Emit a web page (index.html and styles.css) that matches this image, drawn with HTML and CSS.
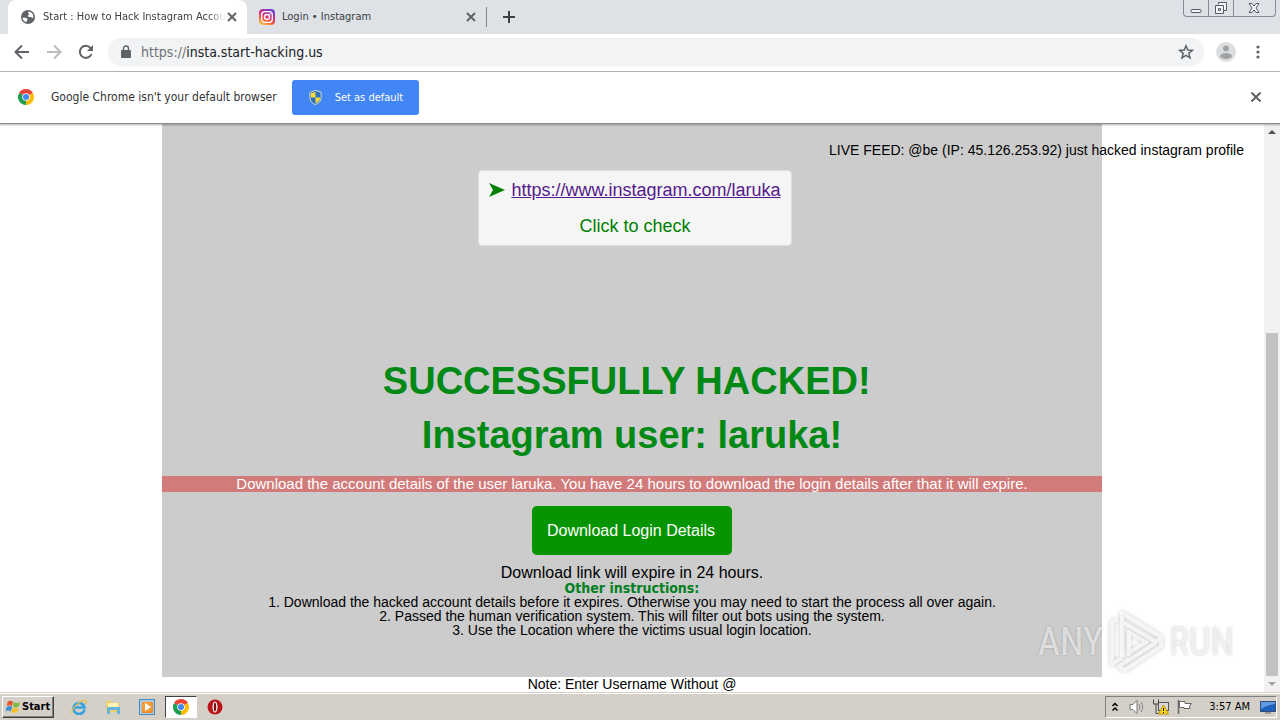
FILE: index.html
```
<!DOCTYPE html>
<html lang="en">
<head>
  <meta charset="utf-8">
  <title>Start : How to Hack Instagram Accou</title>
  <link rel="stylesheet" href="styles.css">
</head>
<body>
  <div class="window">

    <header class="tabstrip">
      <div class="tab active">
        <svg class="favicon" viewBox="0 0 16 16"><circle cx="8" cy="8" r="7" fill="#5f6368"/><path d="M2.500 8.500C2.500 9 3.500 8.500 5 8.700 7 9 8 10 7.500 11 6.500 11.500 6.500 12.500 6.500 13.300 4 12.700 2.500 10.500 2.500 8.500ZM8.500 2.600C11.500 2.900 13.300 5 13.400 7.500 13.200 9.500 12 9 11.500 8.500 11 7.500 9.500 8.300 8.500 7.800 7.500 7 8 6 9 5.600 9.500 5 7.500 4.500 8.500 2.600Z" fill="#fff"/></svg>
        <span class="tab-title fade">Start : How to Hack Instagram Accou</span>
        <button class="tab-close" type="button" aria-label="Close tab"><svg viewBox="0 0 10 10"><path d="M1 1 9 9M9 1 1 9"/></svg></button>
      </div>
      <div class="tab">
        <svg class="favicon" viewBox="0 0 16 16">
          <defs>
            <linearGradient id="insta" x1="0.200" y1="1" x2="0.700" y2="0">
              <stop offset="0" stop-color="#fdc84b"/>
              <stop offset="0.300" stop-color="#f5663b"/>
              <stop offset="0.600" stop-color="#d22d86"/>
              <stop offset="1" stop-color="#6a3fd0"/>
            </linearGradient>
          </defs>
          <rect width="16" height="16" rx="4" fill="url(#insta)"/>
          <rect x="2.700" y="2.700" width="10.600" height="10.600" rx="3" fill="none" stroke="#fff" stroke-width="1.300"/>
          <circle cx="8" cy="8" r="2.500" fill="none" stroke="#fff" stroke-width="1.300"/>
          <circle cx="11" cy="5" r="0.800" fill="#fff"/>
        </svg>
        <span class="tab-title">Login • Instagram</span>
        <button class="tab-close" type="button" aria-label="Close tab"><svg viewBox="0 0 10 10"><path d="M1 1 9 9M9 1 1 9"/></svg></button>
      </div>
      <button class="new-tab" type="button" aria-label="New tab"><svg viewBox="0 0 12 12"><path d="M6 0V12M0 6H12"/></svg></button>
      <div class="window-buttons">
        <button type="button" aria-label="Minimize"><svg viewBox="0 0 16 14"><rect x="3" y="8.500" width="10" height="3" rx="1"/></svg></button>
        <button type="button" aria-label="Restore"><svg viewBox="0 0 16 14"><path d="M5.500 3.500V1.500H13.500V9.500H11M2.500 4.500H10.500V12.500H2.500ZM5.500 7.500H7.500V9.500H5.500Z"/></svg></button>
        <button class="wide" type="button" aria-label="Close"><svg viewBox="0 0 16 14"><path d="M3 2.500H6L8 5 10 2.500H13L10 7 13 11.500H10L8 9 6 11.500H3L6 7Z"/></svg></button>
      </div>
    </header>

    <nav class="toolbar">
      <button class="nav-button" type="button" aria-label="Back"><svg viewBox="0 0 16 16"><path d="M15 8H2M8 1.500 1.500 8 8 14.500"/></svg></button>
      <button class="nav-button disabled" type="button" aria-label="Forward"><svg viewBox="0 0 16 16"><path d="M1 8H14M8 1.500 14.500 8 8 14.500"/></svg></button>
      <button class="nav-button" type="button" aria-label="Reload"><svg viewBox="0 0 16 16"><path d="M13.500 10A6 6 0 1 1 12.500 4L13.500 5.500"/><path class="solid" d="M15 1V7H9Z"/></svg></button>
      <div class="omnibox">
        <svg class="lock" viewBox="0 0 10 13"><rect y="5" width="10" height="8" rx="1" fill="#5f6368"/><path d="M2.500 5V3.500A2.500 2.500 0 0 1 7.500 3.500V5" fill="none" stroke="#5f6368" stroke-width="1.400"/></svg>
        <label for="address">https://</label>
        <input id="address" type="text" value="insta.start-hacking.us">
        <svg class="star" viewBox="0 0 16 16"><path d="M8 1.800 9.700 6.100 14.300 6.400 10.800 9.300 12 13.800 8 11.300 4 13.800 5.200 9.300 1.700 6.400 6.300 6.100Z"/></svg>
      </div>
      <svg class="avatar" viewBox="0 0 20 20"><circle cx="10" cy="10" r="10" fill="#dcdee0"/><circle cx="10" cy="6.500" r="3" fill="#a0a3a6"/><ellipse cx="10" cy="14" rx="6" ry="3" fill="#a0a3a6"/></svg>
      <button class="menu" type="button" aria-label="Menu"><svg viewBox="0 0 4 14"><circle cx="2" cy="2" r="1.600"/><circle cx="2" cy="7" r="1.600"/><circle cx="2" cy="12" r="1.600"/></svg></button>
    </nav>

    <div class="infobar">
      <svg class="chrome" viewBox="0 0 16 16">
        <path d="M8 8 1.070 4A8 8 0 0 1 14.930 4Z" fill="#ea4335"/>
        <path d="M8 8 14.930 4A8 8 0 0 1 8 16Z" fill="#fbbc05"/>
        <path d="M8 8V16A8 8 0 0 1 1.070 4Z" fill="#1e9e50"/>
        <circle cx="8" cy="8" r="3.800" fill="#fff"/><circle cx="8" cy="8" r="3" fill="#4285f4"/>
      </svg>
      <span class="info-text">Google Chrome isn't your default browser</span>
      <button class="set-default" type="button">
        <svg viewBox="0 0 14 16"><path d="M7 0.500 13 2.500V8C13 12 10 14.500 7 15.500 4 14.500 1 12 1 8V2.500Z" fill="#2b6fc0" stroke="#e8e3c0"/><path d="M7 2V8H2V3.500ZM7 8H12C12 11 9.500 13.500 7 14.300Z" fill="#fbd93c"/></svg>
        <span>Set as default</span>
      </button>
      <button class="dismiss" type="button" aria-label="Dismiss"><svg viewBox="0 0 10 10"><path d="M0.500 0.500 9.500 9.500M9.500 0.500 0.500 9.500"/></svg></button>
    </div>

    <div class="viewport">
      <main class="page">
        <p class="live-feed">LIVE FEED: @be (IP: 45.126.253.92) just hacked instagram profile</p>
        <section class="content">
          <div class="profile-box">
            <div class="profile-link">
              <svg viewBox="0 0 16 14"><path d="M0 0 16 7 0 14 4 7Z" fill="#008000"/></svg>
              <a href="#">https://www.instagram.com/laruka</a>
            </div>
            <p>Click to check</p>
          </div>
          <h1>SUCCESSFULLY HACKED!&nbsp;</h1>
          <h2>Instagram user: laruka!</h2>
          <p class="warning">Download the account details of the user laruka. You have 24 hours to download the login details after that it will expire.</p>
          <button class="download" type="button">Download Login Details</button>
          <p class="expire">Download link will expire in 24 hours.</p>
          <h3>Other instructions:</h3>
          <ol>
            <li>Download the hacked account details before it expires. Otherwise you may need to start the process all over again.</li>
            <li>Passed the human verification system. This will filter out bots using the system.</li>
            <li>Use the Location where the victims usual login location.</li>
          </ol>
        </section>
        <p class="note">Note: Enter Username Without @</p>
      </main>
      <div class="scrollbar">
        <svg viewBox="0 0 8 4"><path d="M0 4 4 0 8 4Z" fill="#505050"/></svg>
        <div class="track"><div class="thumb"></div></div>
        <svg viewBox="0 0 8 4"><path d="M0 0 4 4 8 0Z" fill="#a3a3a3"/></svg>
      </div>
      <div class="watermark">
        <span>ANY</span>
        <svg viewBox="0 0 58 64">
          <path d="M10 9 5 12V54L15 48M15 47V3L54 27 49 32 15 12M22 46V22L39 32 22 43M54 28V36L18 60 12 56 49 33"/>
        </svg>
        <span>RUN</span>
      </div>
    </div>

    <footer class="taskbar">
      <button class="start" type="button">
        <svg viewBox="0 0 18 16"><path d="M3 2Q6 0 9 2L8 7Q5 5 2 7Z" fill="#e8542c"/><path d="M10 2.500Q13 4.500 17 2.500L15.500 7.500Q12 9.500 9 7.500Z" fill="#7dbb42"/><path d="M2 8Q5 6 8 8L6.500 13Q3.500 11 0.500 13Z" fill="#3b8fd8"/><path d="M8.500 8.500Q12 10.500 15 8.500L14 13.500Q10.500 15.500 7 13.500Z" fill="#fbc12d"/></svg>
        <span>Start</span>
      </button>
      <div class="launchers">
        <button type="button" aria-label="Internet Explorer"><svg viewBox="0 0 16 16"><path d="M13.500 10.500A5.500 5.500 0 1 1 13.500 8.500H4" fill="none" stroke="#36a3e0" stroke-width="2.600"/><path d="M1 14.500C-1 11 10 0 14.500 1.500Q16 2 14.500 5" fill="none" stroke="#e7bd45" stroke-width="1.300"/></svg></button>
        <button type="button" aria-label="Explorer"><svg viewBox="0 0 16 16"><path d="M1 2H6L7 3.500H14V13H1Z" fill="#efcf6c"/><rect x="3" y="4" width="10" height="5" fill="#fff3ba"/><path d="M2 8H15V15H12V11H5V15H2Z" fill="#65b5df"/></svg></button>
        <button type="button" aria-label="Media Player"><svg viewBox="0 0 16 16"><rect x="0.500" y="0.500" width="15" height="15" fill="#a9cce9" stroke="#4a88bd"/><rect x="3" y="3" width="11" height="11" rx="1" fill="#ef8420"/><circle cx="8" cy="8" r="5.500" fill="#f79c34"/><path d="M6 4 12 8 6 12Z" fill="#fff"/></svg></button>
        <button class="pressed" type="button" aria-label="Google Chrome">
          <svg viewBox="0 0 16 16">
            <path d="M8 8 1.070 4A8 8 0 0 1 14.930 4Z" fill="#ea4335"/>
            <path d="M8 8 14.930 4A8 8 0 0 1 8 16Z" fill="#fbbc05"/>
            <path d="M8 8V16A8 8 0 0 1 1.070 4Z" fill="#1e9e50"/>
            <circle cx="8" cy="8" r="3.800" fill="#fff"/><circle cx="8" cy="8" r="3" fill="#4285f4"/>
          </svg>
        </button>
        <button type="button" aria-label="Opera"><svg viewBox="0 0 16 16"><circle cx="8" cy="8" r="7.500" fill="#b9151b"/><ellipse cx="8" cy="8" rx="2.500" ry="5.500" fill="#fff"/><ellipse cx="8" cy="8" rx="1.200" ry="4.500" fill="#7c1014"/></svg></button>
      </div>
      <div class="tray">
        <svg class="chevrons" viewBox="0 0 8 10"><path d="M1.500 4 4 1.500 6.500 4M1.500 8.500 4 6 6.500 8.500" fill="none" stroke="#000" stroke-width="1.500"/></svg>
        <svg viewBox="0 0 16 16"><path d="M1 5.500H4L8 1.500V14.500L4 10.500H1Z" fill="#fff" stroke="#777"/><path d="M10 5Q12 8 10 11M12 3Q15.500 8 12 13" fill="none" stroke="#888"/></svg>
        <svg viewBox="0 0 16 16"><rect x="5.500" y="3.500" width="10" height="8" fill="#d8d8d8" stroke="#555"/><path d="M0.500 0.500V5H5.500V0.500M3 5V14.500H8" fill="none" stroke="#444"/><path d="M10.500 6 15.500 15H5.500Z" fill="#ffd817" stroke="#c49100"/><path d="M10.500 9V12M10.500 13V14" stroke="#000"/></svg>
        <svg viewBox="0 0 16 16"><path d="M1.500 1V15" stroke="#666" stroke-width="1.500"/><path d="M2.500 2.500H8V4.500H14.500L12.500 7 13 9.500H7V8.500H2.500Z" fill="#fff" stroke="#666"/></svg>
        <time>3:57 AM</time>
        <svg viewBox="0 0 16 16"><path d="M0.500 2.500H15.500V12.500H0.500Z" fill="#1d5fbd" stroke="#304b77"/><path d="M1 3H15V5Q7 6 1 10Z" fill="#5c9be2"/><path d="M5 14H11" stroke="#666"/></svg>
      </div>
    </footer>

  </div>
</body>
</html>
```

FILE: styles.css
```
* {
  margin: 0;
  padding: 0;
  box-sizing: border-box;
}

body {
  font-family: "Liberation Sans", Arial, sans-serif;
  font-size: 14px;
  line-height: 14px;
  color: #000;
  background: #fff;
}

button {
  border: 0;
  background: none;
  font-family: inherit;
  cursor: pointer;
}

svg {
  display: block;
  flex: none;
}

.window {
  display: flex;
  flex-direction: column;
  height: 100vh;
  overflow: hidden;
}

.tabstrip,
.toolbar,
.infobar,
.taskbar {
  flex: none;
  display: flex;
  font-family: "DejaVu Sans Condensed", Tahoma, "DejaVu Sans", sans-serif;
}

/* tabs */
.tabstrip {
  height: 34px;
  padding-left: 8px;
  background: #dee1e6;
}

.tab {
  display: flex;
  align-items: center;
  width: 239px;
  padding: 0 10px 0 12px;
  color: #3c4043;
}

.tab.active {
  background: #fff;
  border-radius: 8px 8px 0 0;
}

.favicon {
  width: 16px;
  height: 16px;
  margin-right: 7px;
}

.tab-title {
  white-space: nowrap;
  font-size: 11px;
}

.fade {
  -webkit-mask-image: linear-gradient(to right, #000 90%, transparent);
  mask-image: linear-gradient(to right, #000 90%, transparent);
}

.tab-close {
  margin-left: auto;
}

.tab-close svg {
  width: 10px;
  height: 10px;
}

.tab-close svg,
.new-tab svg,
.dismiss svg {
  stroke: #5f6368;
  stroke-width: 2;
}

.new-tab {
  height: 20px;
  margin-top: 7px;
  padding: 0 16px;
  border-left: 1px solid #80868b;
}

.new-tab svg {
  width: 12px;
  height: 12px;
  stroke: #3c4043;
}

.window-buttons {
  display: flex;
  height: 17px;
  margin: 0 4px 0 auto;
  border: 1px solid #868c96;
  border-top: 0;
  border-radius: 0 0 4px 4px;
}

.window-buttons button {
  width: 25px;
  padding: 1px 4px;
  border-right: 1px solid #868c96;
}

.window-buttons .wide {
  width: 41px;
  padding: 1px 12px;
  border-right: 0;
}

.window-buttons svg {
  width: 16px;
  height: 14px;
  fill: #f4f5f7;
  stroke: #555b66;
}

/* toolbar */
.toolbar {
  height: 38px;
  align-items: center;
  padding: 0 20px 2px 14px;
  border-bottom: 1px solid #b6b8ba;
}

.nav-button {
  width: 32px;
}

.nav-button svg {
  width: 16px;
  height: 16px;
  fill: none;
  stroke: #5f6368;
  stroke-width: 2;
}

.nav-button .solid {
  fill: #5f6368;
  stroke: none;
}

.nav-button.disabled svg {
  stroke: #babcbe;
}

.omnibox {
  flex: 1;
  display: flex;
  align-items: center;
  height: 28px;
  margin: 0 12px 0 -2px;
  padding: 0 10px 0 13px;
  border-radius: 14px;
  background: #f1f3f4;
  font-size: 14px;
}

.lock {
  width: 10px;
  height: 13px;
  margin-right: 10px;
}

.omnibox label {
  color: #6f7377;
}

.omnibox input {
  flex: 1;
  border: 0;
  outline: 0;
  background: none;
  font: inherit;
  color: #202124;
}

.star {
  width: 16px;
  height: 16px;
  fill: none;
  stroke: #5f6368;
  stroke-width: 1.500;
}

.avatar {
  width: 20px;
  height: 20px;
}

.menu {
  margin-left: 20px;
}

.menu svg {
  width: 4px;
  height: 14px;
  fill: #5f6368;
}

/* default browser bar */
.infobar {
  position: relative;
  z-index: 1;
  height: 52px;
  align-items: center;
  padding: 0 19px 1px 18px;
  background: #fff;
  border-bottom: 1px solid #8c8c8c;
  box-shadow: 0 1px 2px rgba(0, 0, 0, 0.3);
}

.chrome {
  width: 16px;
  height: 16px;
}

.info-text {
  margin: 0 15px 0 17px;
  font-size: 12px;
  color: #333;
}

.set-default {
  display: flex;
  align-items: center;
  gap: 12px;
  height: 35px;
  padding: 0 16px;
  border-radius: 3px;
  background: #4285f4;
  color: #fff;
  font-size: 11px;
}

.set-default svg {
  width: 15px;
  height: 15px;
}

.dismiss {
  margin-left: auto;
}

.dismiss svg {
  width: 10px;
  height: 10px;
}

/* web page */
.viewport {
  flex: 1;
  display: flex;
  position: relative;
  min-height: 0;
}

.page {
  flex: 1;
  position: relative;
  text-align: center;
}

.live-feed {
  position: absolute;
  top: 19px;
  right: 20px;
}

.content {
  display: flex;
  flex-direction: column;
  align-items: center;
  max-width: 940px;
  margin: 0 auto;
  padding: 46px 0 40px;
  background: #ccc;
}

.profile-box {
  display: flex;
  flex-direction: column;
  gap: 18px;
  margin: 0 0 108px 6px;
  padding: 10px;
  border: 1px solid #ddd;
  border-radius: 4px;
  background: #f5f5f5;
  color: #008000;
  font-size: 18px;
  line-height: 18px;
}

.profile-link {
  display: flex;
  align-items: center;
  gap: 6px;
}

.profile-link svg {
  width: 16px;
  height: 14px;
}

.profile-link a {
  color: #551a8b;
}

h1,
h2 {
  font-size: 38px;
  line-height: 54px;
  color: #008914;
}

.warning {
  align-self: stretch;
  margin: 14px 0;
  background: #d17b7b;
  color: #fff;
  font-size: 15px;
  line-height: 16px;
}

.download {
  height: 49px;
  padding: 0 17px 0 15px;
  border-radius: 5px;
  background: #069400;
  color: #fff;
  font-size: 16px;
}

.expire {
  margin-top: 10px;
  font-size: 16px;
  line-height: 16px;
}

h3 {
  font-family: "DejaVu Sans Condensed", Verdana, sans-serif;
  font-size: 14px;
  line-height: 14px;
  color: #008020;
}

ol {
  list-style-position: inside;
}

/* scrollbar */
.scrollbar {
  display: flex;
  flex-direction: column;
  align-items: center;
  width: 16px;
  padding: 6px 2px;
  gap: 6px;
  background: #f1f1f1;
}

.scrollbar svg {
  width: 8px;
  height: 4px;
}

.track {
  flex: 1;
  display: flex;
  align-self: stretch;
  align-items: flex-end;
}

.thumb {
  width: 100%;
  height: 64%;
  background: #c1c1c1;
}

/* watermark over the page */
.watermark {
  position: absolute;
  right: 46px;
  bottom: 18px;
  display: flex;
  align-items: center;
  gap: 4px;
  font-family: "Roboto Condensed", Roboto, sans-serif;
  font-size: 38px;
  line-height: 64px;
  color: rgba(255, 255, 255, 0.6);
  text-shadow: 0 0 3px rgba(0, 0, 0, 0.2);
  pointer-events: none;
}

.watermark svg {
  width: 58px;
  height: 64px;
  fill: none;
  stroke: rgba(255, 255, 255, 0.7);
  stroke-width: 4;
  stroke-linejoin: round;
  filter: drop-shadow(0 0 2px rgba(0, 0, 0, 0.3));
}

/* taskbar */
.taskbar {
  align-items: center;
  height: 28px;
  padding: 0 3px 0 2px;
  border-top: 1px solid #d4d0c8;
  box-shadow: inset 0 1px #fff;
  background: #d4d0c8;
}

.start {
  display: flex;
  align-items: center;
  gap: 1px;
  height: 22px;
  padding: 0 3px 0 2px;
  border: 1px solid;
  border-color: #fff #404040 #404040 #fff;
  box-shadow: inset -1px -1px #808080;
  font-size: 11px;
  font-weight: bold;
}

.start svg {
  width: 16px;
  height: 16px;
}

.launchers {
  display: flex;
  gap: 2px;
  margin-left: 9px;
}

.launchers button {
  display: flex;
  align-items: center;
  justify-content: center;
  width: 32px;
  height: 22px;
}

.launchers .pressed {
  border: 1px solid;
  border-color: #404040 #fff #fff #404040;
  background: #fff;
}

.launchers svg {
  width: 16px;
  height: 16px;
}

.tray {
  display: flex;
  align-items: center;
  gap: 8px;
  height: 22px;
  margin-left: auto;
  padding: 0 0 0 5px;
  border: 1px solid;
  border-color: #808080 #fff #fff #808080;
  font-size: 11px;
}

.tray svg {
  width: 16px;
  height: 16px;
}

.tray .chevrons {
  width: 8px;
  height: 10px;
  margin-right: 2px;
}

.tray time {
  margin: 0 2px 0 8px;
}
```
